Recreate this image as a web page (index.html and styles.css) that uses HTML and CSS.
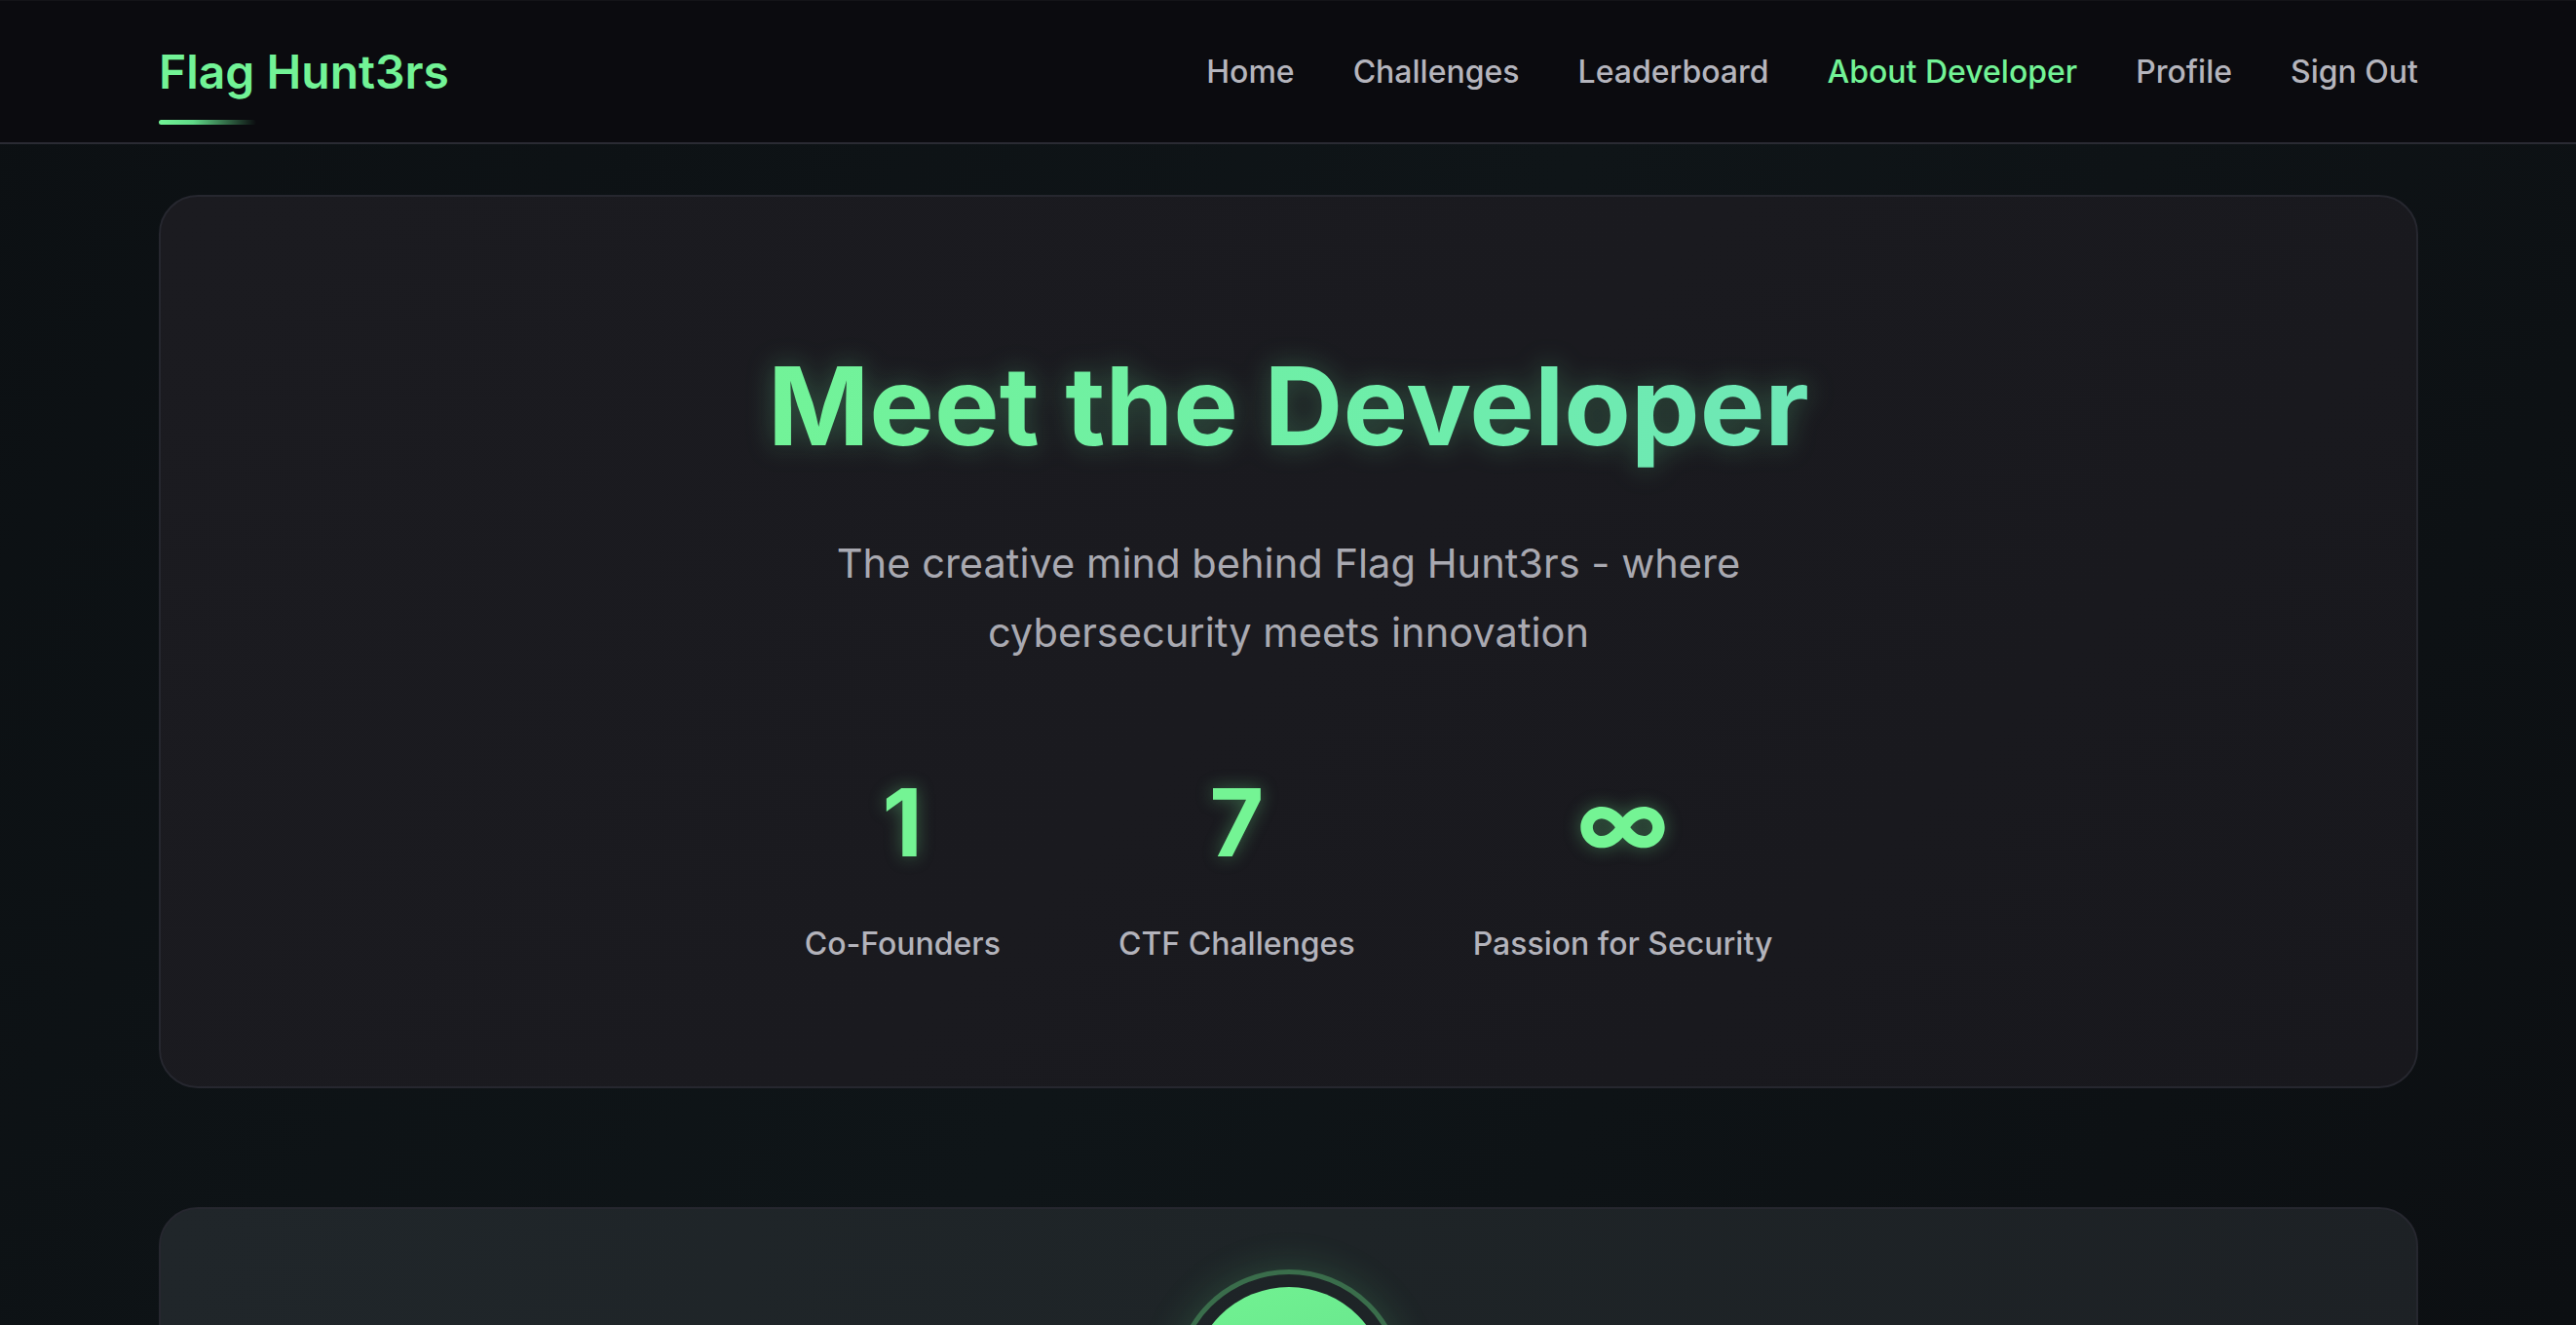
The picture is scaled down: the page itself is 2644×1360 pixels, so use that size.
FILE: index.html
```html
<!DOCTYPE html>
<html lang="en">
<head>
<meta charset="utf-8">
<title>About Developer - Flag Hunt3rs</title>
<link rel="stylesheet" href="styles.css">
</head>
<body>
<header class="navbar">
  <div class="container nav-inner">
    <a class="logo" href="#">Flag Hunt3rs</a>
    <nav class="nav-links">
      <a href="#">Home</a>
      <a href="#">Challenges</a>
      <a href="#">Leaderboard</a>
      <a href="#" class="active">About Developer</a>
      <a href="#">Profile</a>
      <a href="#">Sign Out</a>
    </nav>
  </div>
</header>
<main class="container main">
  <section class="card hero">
    <h1 class="hero-title">Meet the Developer</h1>
    <p class="hero-sub">The creative mind behind Flag Hunt3rs - where cybersecurity meets innovation</p>
    <div class="stats">
      <div class="stat"><div class="stat-num">1</div><div class="stat-label">Co-Founders</div></div>
      <div class="stat"><div class="stat-num">7</div><div class="stat-label">CTF Challenges</div></div>
      <div class="stat"><div class="stat-num inf">∞</div><div class="stat-label">Passion for Security</div></div>
    </div>
  </section>
  <section class="card profile">
    <div class="avatar-wrap"><div class="avatar"></div></div>
  </section>
</main>
</body>
</html>
```
FILE: styles.css
```css
* { box-sizing: border-box; margin: 0; padding: 0; }
html, body { height: 100%; }
body {
  font-family: Inter, "Noto Sans", "Liberation Sans", sans-serif;
  background: linear-gradient(120deg, #0c1013 0%, #0f1518 50%, #0c0f12 100%);
  color: #b3b3bb;
  overflow: hidden;
}
a { text-decoration: none; color: inherit; }
.container {
  width: 2320px;
  margin: 0 auto;
  padding-left: 1px;
}
.navbar {
  height: 148px;
  background: #0b0b0f;
  border-top: 1px solid #141418;
  border-bottom: 2px solid #2a2b33;
}
.nav-inner {
  height: 100%;
  display: flex;
  align-items: center;
  justify-content: space-between;
}
.logo {
  position: relative;
  font-size: 48px;
  line-height: 1.2;
  font-weight: 600;
  color: #72f396;
}
.logo::after {
  content: "";
  position: absolute;
  left: 0;
  bottom: -26px;
  width: 100px;
  height: 5px;
  border-radius: 3px;
  background: linear-gradient(90deg, #72f396 0%, #5fd987 35%, rgba(95, 217, 135, 0) 100%);
}
.nav-links {
  display: flex;
  gap: 60px;
}
.nav-links a {
  font-size: 32px;
  line-height: 1.5;
  font-weight: 500;
  color: #b5b5bd;
}
.nav-links a.active { color: #72f396; }
.main {
  padding-top: 52px;
  display: flex;
  flex-direction: column;
  gap: 122px;
}
.card {
  border: 2px solid #26272f;
  border-radius: 40px;
}
.hero {
  background: linear-gradient(135deg, #1b1b20 0%, #1a1a1f 50%, #18181d 100%);
  padding: 147px 40px 122px;
  display: flex;
  flex-direction: column;
  align-items: center;
  text-align: center;
}
.hero-title {
  font-size: 112px;
  line-height: 1.2;
  font-weight: 700;
  background: linear-gradient(90deg, #72f398 0%, #6eeeaa 60%, #6ee7b7 100%);
  -webkit-background-clip: text;
  background-clip: text;
  color: transparent;
  filter: drop-shadow(0 0 14px rgba(110, 240, 160, 0.28));
}
.hero-sub {
  margin-top: 60px;
  max-width: 1000px;
  font-size: 41.6px;
  line-height: 71px;
  color: #a9a9b1;
}
.stats {
  margin-top: 102px;
  display: flex;
  gap: 121px;
}
.stat {
  display: flex;
  flex-direction: column;
  align-items: center;
}
.stat-num {
  font-size: 96px;
  line-height: 115px;
  font-weight: 700;
  color: #74f494;
  text-shadow: 0 0 18px rgba(116, 244, 148, 0.35);
}
.stat-label {
  margin-top: 43px;
  font-size: 32px;
  line-height: 48px;
  font-weight: 500;
  color: #b3b3bb;
}
.profile {
  background: linear-gradient(100deg, #20262a 0%, #1e2427 50%, #1d2125 100%);
  padding: 80px 40px 200px;
  display: flex;
  justify-content: center;
}
.avatar-wrap {
  position: relative;
  width: 200px;
  height: 200px;
}
.avatar-wrap::before {
  content: "";
  position: absolute;
  inset: -18px;
  border-radius: 50%;
  border: 5px solid rgba(100, 220, 130, 0.4);
  box-shadow: 0 0 40px rgba(100, 230, 140, 0.18);
}
.avatar {
  width: 200px;
  height: 200px;
  border-radius: 50%;
  background: linear-gradient(160deg, #72f392 0%, #5fd989 100%);
}
```
